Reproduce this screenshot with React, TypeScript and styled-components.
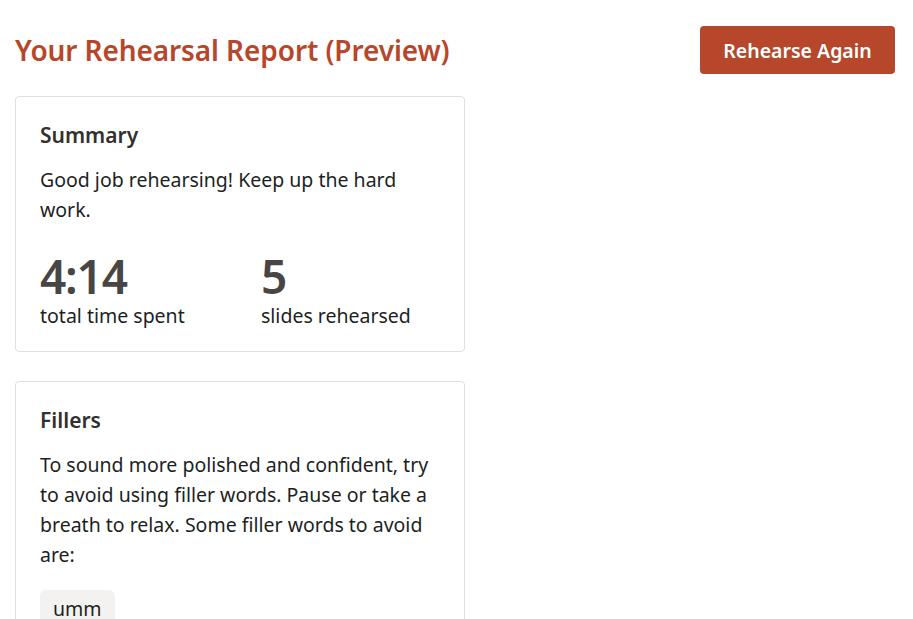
import React from "react";
import styled, { createGlobalStyle } from "styled-components";

const Global = createGlobalStyle`
  html, body { margin: 0; padding: 0; background: #ffffff; }
  body { font-family: "Noto Sans", "Open Sans", sans-serif; color: #201f1e; }
  * { box-sizing: border-box; }
`;

const Page = styled.div`
  padding: 26px 18px 0 15px;
  display: flex;
  flex-direction: column;
`;

const Header = styled.header`
  display: flex;
  align-items: center;
  justify-content: space-between;
  height: 48px;
`;

const Title = styled.h1`
  margin: 0;
  font-size: 28px;
  font-weight: 600;
  color: #b7472a;
  letter-spacing: -0.1px;
`;

const PrimaryButton = styled.button`
  width: 195px;
  height: 48px;
  border: none;
  border-radius: 4px;
  background: #b7472a;
  color: #ffffff;
  font-family: inherit;
  font-size: 19.5px;
  font-weight: 600;
  cursor: pointer;
`;

const Cards = styled.div`
  display: flex;
  flex-direction: column;
  gap: 29px;
  margin-top: 22px;
  width: 450px;
`;

const Card = styled.section`
  border: 1px solid #e1dfdd;
  border-radius: 4px;
  padding: 20px 23px 21px 24px;
`;

const CardTitle = styled.h2`
  margin: 0 0 12px;
  font-size: 21px;
  font-weight: 600;
  color: #323130;
  line-height: 36px;
`;

const Text = styled.p`
  margin: 0;
  font-size: 19.5px;
  line-height: 30px;
  color: #201f1e;
`;

const Stats = styled.div`
  display: grid;
  grid-template-columns: 221px 1fr;
  margin-top: 25px;
`;

const Stat = styled.div`
  display: flex;
  flex-direction: column;
`;

const StatValue = styled.span`
  font-size: 46px;
  font-weight: 600;
  line-height: 52px;
  color: #484644;
  letter-spacing: -1.2px;
`;

const StatLabel = styled.span`
  font-size: 19.5px;
  line-height: 28px;
  color: #201f1e;
`;

const Chips = styled.div`
  display: flex;
  gap: 8px;
  margin-top: 20px;
`;

const Chip = styled.span`
  background: #f3f2f1;
  border-radius: 6px;
  padding: 4px 13px 6px;
  font-size: 19.5px;
  line-height: 30px;
  color: #201f1e;
`;

export default function App() {
  return (
    <>
      <Global />
      <Page>
        <Header>
          <Title>Your Rehearsal Report (Preview)</Title>
          <PrimaryButton>Rehearse Again</PrimaryButton>
        </Header>
        <Cards>
          <Card>
            <CardTitle>Summary</CardTitle>
            <Text>Good job rehearsing! Keep up the hard work.</Text>
            <Stats>
              <Stat>
                <StatValue>4:14</StatValue>
                <StatLabel>total time spent</StatLabel>
              </Stat>
              <Stat>
                <StatValue>5</StatValue>
                <StatLabel>slides rehearsed</StatLabel>
              </Stat>
            </Stats>
          </Card>
          <Card>
            <CardTitle>Fillers</CardTitle>
            <Text>
              To sound more polished and confident, try to avoid using filler
              words. Pause or take a breath to relax. Some filler words to avoid
              are:
            </Text>
            <Chips>
              <Chip>umm</Chip>
            </Chips>
          </Card>
        </Cards>
      </Page>
    </>
  );
}
